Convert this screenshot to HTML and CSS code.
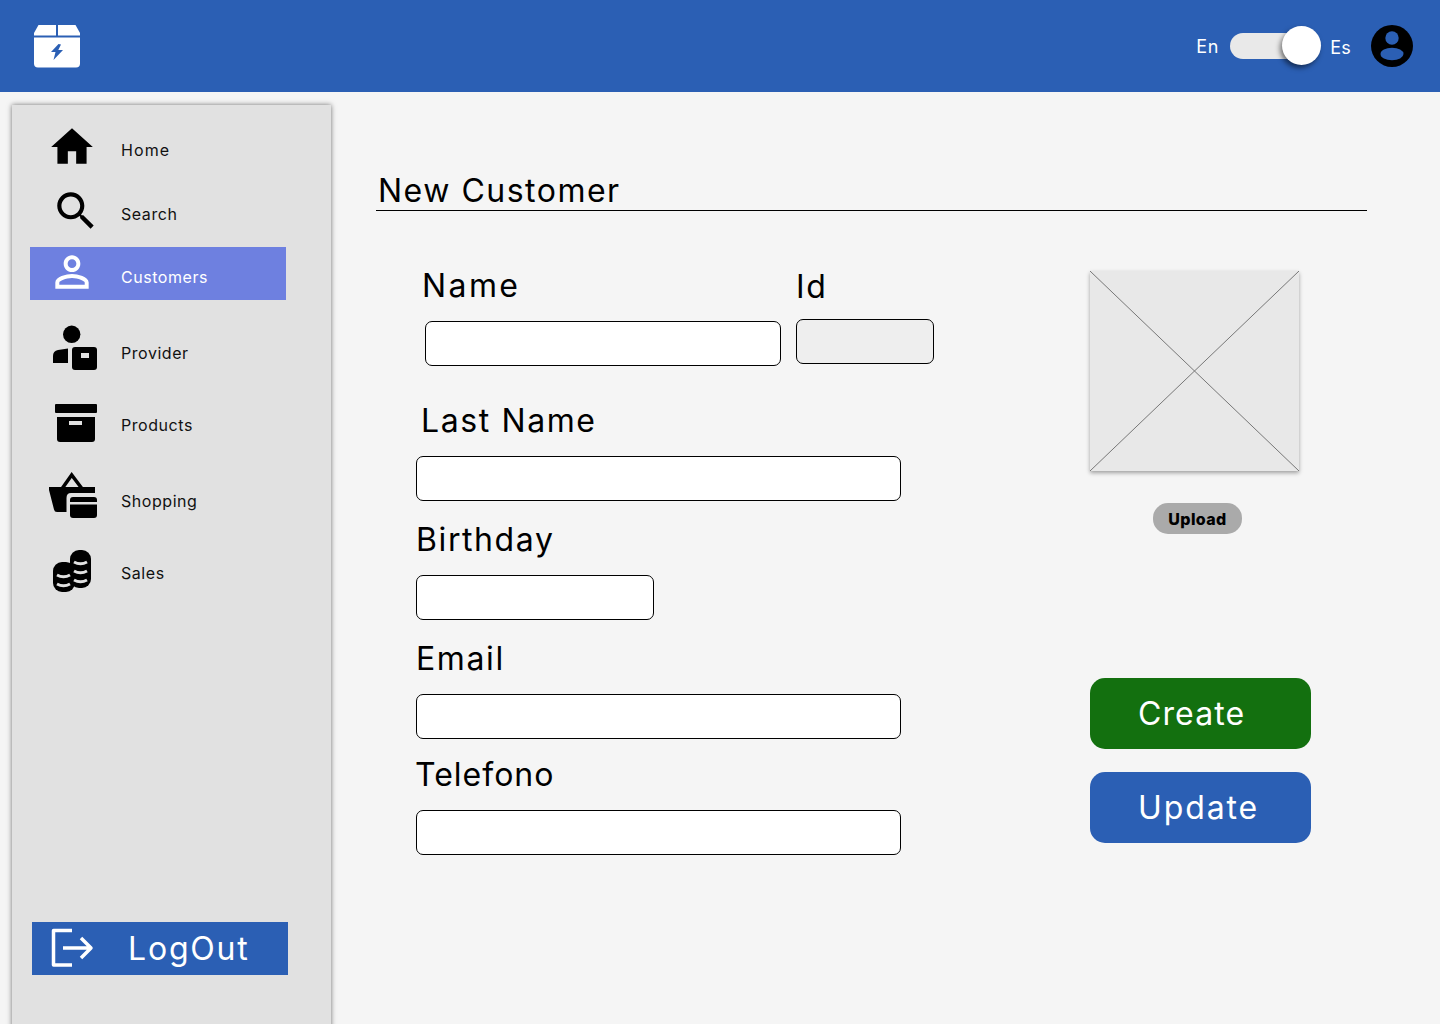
FILE: index.html
```html
<!DOCTYPE html>
<html>

<head>
    <title>New Customer</title>
    <link rel="stylesheet" href="styles.css">
</head>

<body>
    <header class="topbar">
        <svg class="logo" viewBox="0 0 46 43">
            <path fill="#fff" d="M4.5 0H22V10.5H0V8z" />
            <path fill="#fff" d="M24 0H41.5L46 8V10.5H24z" />
            <path fill="#fff" d="M0 12.5H46V38.5a4 4 0 0 1-4 4H4a4 4 0 0 1-4-4z" />
            <path fill="#2b5fb4" d="M24.5 19L17 27H21.5L19.5 35L29 25H24.3L27 19.5z" />
        </svg>
        <div class="topbar-right">
            <span class="lang">En</span>
            <div class="toggle"><span class="toggle-knob"></span></div>
            <span class="lang lang-es">Es</span>
            <svg class="avatar" viewBox="0 0 42 42">
                <circle cx="21" cy="21" r="21" fill="#000" />
                <circle cx="21" cy="13" r="6.7" fill="#2b5fb4" />
                <ellipse cx="21" cy="29" rx="11.5" ry="6.2" fill="#2b5fb4" />
            </svg>
        </div>
    </header>

    <div class="page">
        <aside class="sidebar">
            <nav class="nav">
                <a class="nav-item">
                    <svg class="nav-icon" viewBox="0 0 24 24"><path d="M10 20v-6h4v6h5v-8h3L12 3 2 12h3v8z" /></svg>
                    <span class="label-home">Home</span>
                </a>
                <a class="nav-item">
                    <svg class="nav-icon icon-search" viewBox="0 0 24 24"><path d="M15.5 14h-.79l-.28-.27C15.41 12.59 16 11.11 16 9.5 16 5.91 13.09 3 9.5 3S3 5.91 3 9.5 5.91 16 9.5 16c1.61 0 3.09-.59 4.23-1.57l.27.28v.79l5 4.99L20.49 19l-4.99-5zm-6 0C7.01 14 5 11.99 5 9.5S7.01 5 9.5 5 14 7.01 14 9.5 11.99 14 9.5 14z" /></svg>
                    <span>Search</span>
                </a>
                <a class="nav-item active">
                    <svg class="nav-icon" viewBox="0 0 24 24"><path fill="#fff" d="M12 5.9c1.16 0 2.1.94 2.1 2.1s-.94 2.1-2.1 2.1S9.9 9.16 9.9 8s.94-2.1 2.1-2.1m0 9c2.97 0 6.1 1.46 6.1 2.1v1.1H5.9V17c0-.64 3.13-2.1 6.1-2.1M12 4C9.79 4 8 5.79 8 8s1.79 4 4 4 4-1.79 4-4-1.79-4-4-4zm0 9c-2.67 0-8 1.34-8 4v3h16v-3c0-2.66-5.33-4-8-4z" /></svg>
                    <span>Customers</span>
                </a>
                <a class="nav-item">
                    <svg class="nav-icon" viewBox="0 0 50 50">
                        <circle cx="24.7" cy="9.3" r="8.7" />
                        <path d="M6 38V31Q6 26 11 25L21 23.5V38z" />
                        <rect x="25" y="22" width="25" height="23" rx="3" />
                        <rect class="cut" x="34" y="28" width="8" height="5" />
                    </svg>
                    <span>Provider</span>
                </a>
                <a class="nav-item">
                    <svg class="nav-icon" viewBox="0 0 50 50">
                        <rect x="8" y="7" width="42" height="9" rx="1" />
                        <path d="M10 20H48V42a3 3 0 0 1-3 3H13a3 3 0 0 1-3-3z" />
                        <rect class="cut" x="22" y="24" width="13" height="4" />
                    </svg>
                    <span>Products</span>
                </a>
                <a class="nav-item">
                    <svg class="nav-icon" viewBox="0 0 50 50">
                        <path class="handle" d="M15.500 15L24.700 2L34.500 15" />
                        <path d="M2 14H48V20H24Q19.500 20 19.500 25V39H10Q7.500 39 7 36.500L2 17z" />
                        <rect class="card-gap" x="22" y="23" width="29" height="23" rx="3" />
                        <rect x="23" y="24" width="27" height="21" rx="3" />
                        <rect class="cut" x="23" y="29" width="27" height="2.500" />
                    </svg>
                    <span>Shopping</span>
                </a>
                <a class="nav-item">
                    <svg class="nav-icon" viewBox="0 0 50 50">
                        <rect x="23" y="5" width="21" height="38" rx="9" />
                        <rect x="6" y="17" width="22" height="30" rx="9" />
                        <path class="band" d="M27 17q6.500 3.500 13 0M27 26q6.500 3.500 13 0M27 35q6.500 3.500 13 0M10 30q6.500 3.500 13 0M10 39q6.500 3.500 13 0" />
                    </svg>
                    <span>Sales</span>
                </a>
            </nav>
            <a class="logout">
                <svg class="logout-icon" viewBox="0 0 46 46">
                    <path d="M22 4.500H3.500V39H22M13 22H41M31 12L41 22L31 32" />
                </svg>
                <span>LogOut</span>
            </a>
        </aside>

        <main class="content">
            <h1 class="title">New Customer</h1>

            <div class="form-area">
                <form class="form">
                    <div class="row-name">
                        <div class="field-name">
                            <label class="label" for="name">Name</label>
                            <input class="input" type="text" id="name">
                        </div>
                        <div class="field-id">
                            <label class="label" for="id">Id</label>
                            <input class="input input-id" type="text" id="id">
                        </div>
                    </div>

                    <div class="field field-lastname">
                        <label class="label" for="lastname">Last Name</label>
                        <input class="input" type="text" id="lastname">
                    </div>
                    <div class="field">
                        <label class="label" for="birthday">Birthday</label>
                        <input class="input input-short" type="text" id="birthday">
                    </div>
                    <div class="field">
                        <label class="label" for="email">Email</label>
                        <input class="input" type="text" id="email">
                    </div>
                    <div class="field field-phone">
                        <label class="label" for="phone">Telefono</label>
                        <input class="input" type="text" id="phone">
                    </div>
                </form>

                <div class="side">
                    <svg class="photo" viewBox="0 0 209 200">
                        <path d="M0 0L209 200M209 0L0 200" />
                    </svg>
                    <button class="btn-upload" type="button">Upload</button>
                    <button class="btn btn-create" type="button">Create</button>
                    <button class="btn btn-update" type="button">Update</button>
                </div>
            </div>
        </main>
    </div>
</body>

</html>
```

FILE: styles.css
```css
* {
    box-sizing: border-box;
}

html,
body {
    height: 1024px;
    overflow: hidden;
}

body {
    margin: 0;
    font-family: Inter, "Liberation Sans", sans-serif;
    background-color: #f5f5f5;
    color: #000;
}

.topbar {
    height: 92px;
    padding: 0 27px 0 34px;
    display: flex;
    align-items: center;
    justify-content: space-between;
    background-color: #2b5fb4;
}

.logo {
    width: 46px;
    height: 43px;
}

.topbar-right {
    display: flex;
    align-items: center;
}

.lang {
    font-size: 18px;
    letter-spacing: 0.8px;
    color: #fff;
}

.lang-es {
    margin: 2px 20px 0 0;
    letter-spacing: 0.2px;
}

.toggle {
    position: relative;
    width: 70px;
    height: 26px;
    margin: 0 30px 0 11px;
    border-radius: 13px;
    background-color: #e9e9e9;
}

.toggle-knob {
    position: absolute;
    top: -7px;
    right: -21px;
    width: 39px;
    height: 39px;
    border-radius: 50%;
    background-color: #fff;
    box-shadow: -2px 3px 5px rgba(0, 0, 0, 0.5);
}

.avatar {
    width: 42px;
    height: 42px;
}

.page {
    display: flex;
    height: 932px;
}

.sidebar {
    position: relative;
    flex: none;
    width: 319px;
    height: 930px;
    margin: 13px 0 0 12px;
    padding-top: 17px;
    background-color: #e1e1e1;
    box-shadow: 0 0 5px rgba(0, 0, 0, 0.55);
}

.nav {
    display: grid;
    grid-template-rows: 64px 61px 78px 72px 76px 72px 56px;
    width: 256px;
    margin-left: 18px;
}

.nav-item {
    display: flex;
    gap: 24px;
    height: 56px;
    padding-left: 17px;
    font-size: 16px;
    line-height: 56px;
    letter-spacing: 0.55px;
    color: #111;
}

.label-home {
    letter-spacing: 1.1px;
}

.nav-icon {
    flex: none;
    width: 50px;
    height: 50px;
    overflow: visible;
}

.icon-search {
    margin: 0 -4px 0 4px;
}

.cut,
.card-gap {
    fill: #e1e1e1;
}

.handle {
    fill: none;
    stroke: #000;
    stroke-width: 3.5px;
}

.band {
    fill: none;
    stroke: #e1e1e1;
    stroke-width: 3px;
}

.active {
    height: 53px;
    background-color: #6e80e0;
    color: #fff;
}

.active span {
    margin-top: 2px;
}

.logout {
    position: absolute;
    left: 20px;
    top: 817px;
    display: flex;
    align-items: center;
    width: 256px;
    height: 53px;
    padding-left: 18px;
    background-color: #2b5fb4;
    font-size: 32px;
    letter-spacing: 1.8px;
    color: #fff;
}

.logout-icon {
    width: 46px;
    height: 46px;
    margin-right: 32px;
    fill: none;
    stroke: #fff;
    stroke-width: 3.5px;
    stroke-linejoin: round;
}

.content {
    flex: 1;
    padding: 78px 73px 0 45px;
}

.title {
    height: 41px;
    margin: 0;
    padding-left: 2px;
    border-bottom: 1px solid #000;
    font-size: 32px;
    font-weight: 400;
    line-height: 42px;
    letter-spacing: 1.5px;
}

.form-area {
    display: flex;
}

.form {
    flex: none;
    width: 714px;
    padding: 55px 0 0 40px;
}

.label {
    display: block;
    height: 40px;
    margin-bottom: 15px;
    font-size: 32px;
    line-height: 40px;
    letter-spacing: 1.6px;
}

.input {
    display: block;
    width: 485px;
    height: 45px;
    border: 1px solid #000;
    border-radius: 7px;
    background-color: #fff;
}

.input-short {
    width: 238px;
}

.row-name {
    display: flex;
    gap: 15px;
    padding-left: 9px;
}

.field-name .label {
    margin-left: -3px;
    letter-spacing: 2.4px;
}

.field-name .input {
    width: 356px;
}

.field-id {
    margin-top: 1px;
}

.field-id .label {
    margin-bottom: 12px;
}

.input-id {
    width: 138px;
    background-color: #eee;
}

.field {
    margin-top: 19px;
}

.field-lastname {
    margin-top: 35px;
}

.field-lastname .label {
    padding-left: 5px;
}

.field-phone {
    margin-top: 16px;
}

.field-phone .label {
    margin-left: -1px;
    letter-spacing: 1px;
}

.side {
    display: flex;
    flex-direction: column;
    align-items: flex-start;
    padding-top: 60px;
}

.photo {
    width: 209px;
    height: 200px;
    background-color: #e8e8e8;
    box-shadow: 0 2px 4px rgba(0, 0, 0, 0.35);
    stroke: #777;
    stroke-width: 1px;
}

.btn-upload {
    width: 89px;
    height: 31px;
    margin: 32px 0 0 63px;
    padding: 0;
    border: none;
    border-radius: 15px;
    background-color: #aaa;
    font-family: Inter, "Liberation Sans", sans-serif;
    font-size: 16px;
    font-weight: 800;
    letter-spacing: 0.4px;
    color: #000;
}

.btn {
    width: 221px;
    height: 71px;
    padding: 0 0 0 48px;
    border: none;
    border-radius: 15px;
    font-family: Inter, "Liberation Sans", sans-serif;
    font-size: 32px;
    letter-spacing: 1.1px;
    text-align: left;
    color: #fff;
}

.btn-create {
    margin-top: 144px;
    background-color: #13700f;
}

.btn-update {
    margin-top: 23px;
    background-color: #2b5fb4;
    letter-spacing: 1.9px;
}
```
